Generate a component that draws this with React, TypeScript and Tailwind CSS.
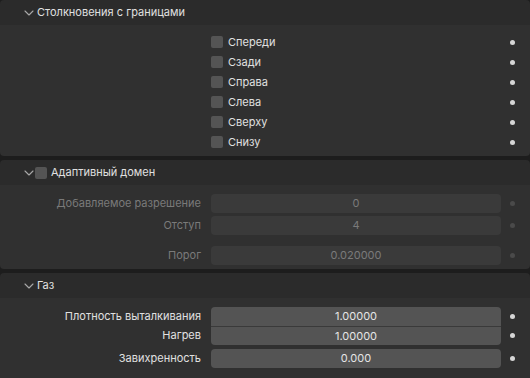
import React from "react";

const Chevron = () => (
  <svg width="10" height="6" viewBox="0 0 10 6" className="shrink-0">
    <path d="M1 1 L5 5 L9 1" fill="none" stroke="#a8a8a8" strokeWidth="1.1" strokeLinecap="round" strokeLinejoin="round" />
  </svg>
);

const Dot = ({ dim }: { dim?: boolean }) => (
  <div className="w-[18px] flex justify-center">
    <div className={`w-[5px] h-[5px] rounded-full ${dim ? "bg-[#4a4a4a]" : "bg-[#d6d6d6]"}`} />
  </div>
);

const Header = ({ children }: { children: React.ReactNode }) => (
  <div className="h-[25px] flex items-center pl-[24px] bg-[#2b2b2b] text-[#e0e0e0] rounded-t-[4px]">
    {children}
  </div>
);

const CheckRow = ({ label }: { label: string }) => (
  <div className="h-[20px] flex items-center pr-[9px]">
    <div className="w-[211px]" />
    <div className="w-[12px] h-[12px] rounded-[2px] bg-[#545454]" />
    <div className="ml-[5px] text-[#e0e0e0] flex-1">{label}</div>
    <Dot />
  </div>
);

const FieldRow = ({
  label,
  value,
  disabled,
  pos,
}: {
  label: string;
  value: string;
  disabled?: boolean;
  pos?: "top" | "bottom" | "single";
}) => {
  const r =
    pos === "top" ? "rounded-t-[4px]" : pos === "bottom" ? "rounded-b-[4px] border-t border-[#3a3a3a]" : "rounded-[4px]";
  return (
    <div className="h-[19px] flex items-center">
      <div className={`w-[201px] text-right ${disabled ? "text-[#7a7a7a]" : "text-[#e0e0e0]"}`}>{label}</div>
      <div className="w-[10px]" />
      <div
        className={`w-[290px] h-full flex items-center justify-center ${r} ${
          disabled ? "bg-[#3a3a3a] text-[#7a7a7a]" : "bg-[#545454] text-[#e5e5e5]"
        }`}
      >
        {value}
      </div>
      <div className="w-[2px]" />
      <Dot dim={disabled} />
    </div>
  );
};

export default function App() {
  return (
    <div
      className="w-[530px] h-[378px] bg-[#1d1d1d] overflow-hidden text-[11px] flex flex-col gap-[4px]"
      style={{ fontFamily: "Inter, 'Noto Sans', sans-serif" }}
    >
      <div className="flex flex-col">
        <Header>
          <Chevron />
          <span className="ml-[3px]">Столкновения с границами</span>
        </Header>
        <div className="bg-[#303030] pt-[7px] pb-[4px] rounded-b-[4px]">
          {["Спереди", "Сзади", "Справа", "Слева", "Сверху", "Снизу"].map((l) => (
            <CheckRow key={l} label={l} />
          ))}
        </div>
      </div>

      <div className="flex flex-col">
        <Header>
          <Chevron />
          <div className="ml-[1px] w-[12px] h-[12px] rounded-[2px] bg-[#545454]" />
          <span className="ml-[4px]">Адаптивный домен</span>
        </Header>
        <div className="bg-[#303030] pt-[9px] pb-[4px] rounded-b-[4px] flex flex-col">
          <FieldRow label="Добавляемое разрешение" value="0" disabled pos="single" />
          <div className="h-[3px]" />
          <FieldRow label="Отступ" value="4" disabled pos="single" />
          <div className="h-[11px]" />
          <FieldRow label="Порог" value="0.020000" disabled pos="single" />
        </div>
      </div>

      <div className="flex flex-col flex-1">
        <Header>
          <Chevron />
          <span className="ml-[3px]">Газ</span>
        </Header>
        <div className="bg-[#303030] pt-[9px] flex-1 flex flex-col">
          <FieldRow label="Плотность выталкивания" value="1.00000" pos="top" />
          <FieldRow label="Нагрев" value="1.00000" pos="bottom" />
          <div className="h-[4px]" />
          <FieldRow label="Завихренность" value="0.000" pos="single" />
        </div>
      </div>
    </div>
  );
}
